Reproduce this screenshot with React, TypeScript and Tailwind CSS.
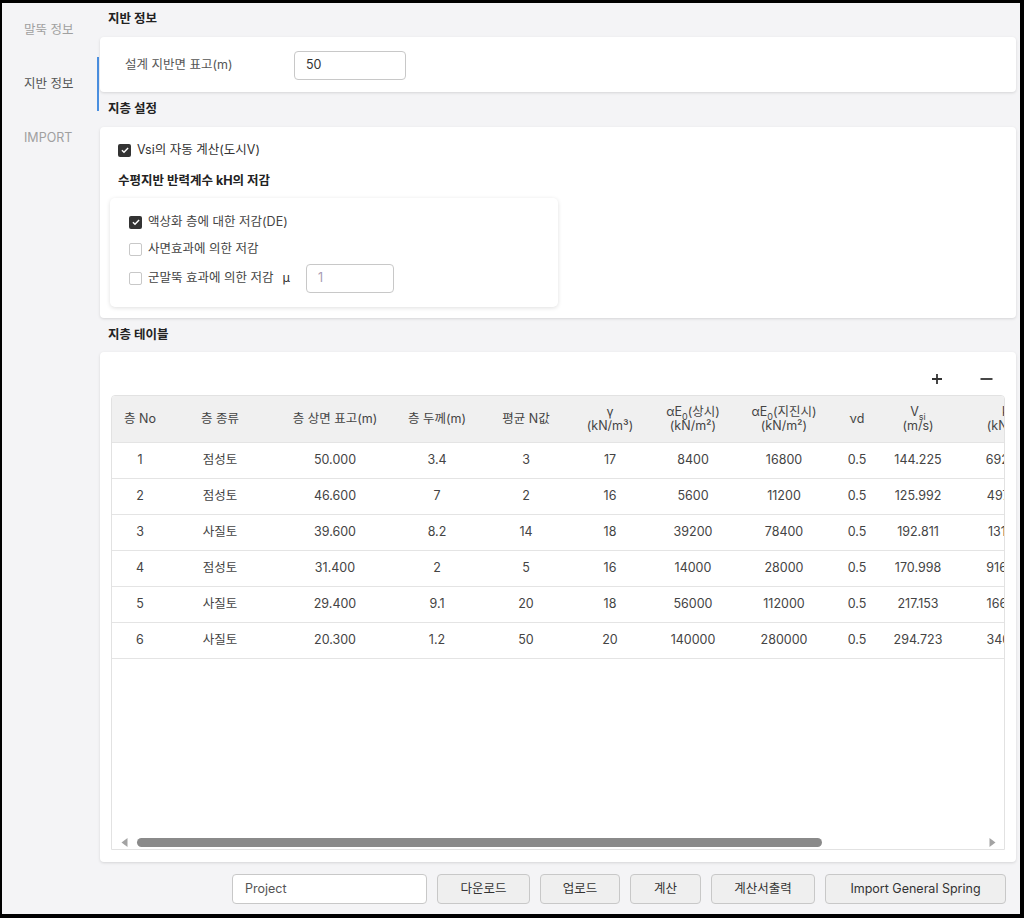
import React from "react";

const cols = [
  "w-[56px]",
  "w-[104px]",
  "w-[126px]",
  "w-[78px]",
  "w-[100px]",
  "w-[68px]",
  "w-[98px]",
  "w-[84px]",
  "w-[62px]",
  "w-[60px]",
  "w-[124px]",
  "w-[110px]",
];

const sub = "text-[9px] leading-[0] align-[-2px]";

const headers: React.ReactNode[] = [
  "층 No",
  "층 종류",
  "층 상면 표고(m)",
  "층 두께(m)",
  "평균 N값",
  <>
    γ<br />
    (kN/m³)
  </>,
  <>
    αE<sub className={sub}>0</sub>(상시)
    <br />
    (kN/m²)
  </>,
  <>
    αE<sub className={sub}>0</sub>(지진시)
    <br />
    (kN/m²)
  </>,
  "νd",
  <>
    V<sub className={sub}>si</sub>
    <br />
    (m/s)
  </>,
  <>
    kH
    <br />
    (kN/m³)
  </>,
  <>
    G<sub className={sub}>0</sub>
    <br />
    (kN/m²)
  </>,
];

const rows = [
  ["1", "점성토", "50.000", "3.4", "3", "17", "8400", "16800", "0.5", "144.225", "69236.7", "36047.2"],
  ["2", "점성토", "46.600", "7", "2", "16", "5600", "11200", "0.5", "125.992", "49712.3", "25891.0"],
  ["3", "사질토", "39.600", "8.2", "14", "18", "39200", "78400", "0.5", "192.811", "13104.7", "68215.4"],
  ["4", "점성토", "31.400", "2", "5", "16", "14000", "28000", "0.5", "170.998", "91644.8", "47689.3"],
  ["5", "사질토", "29.400", "9.1", "20", "18", "56000", "112000", "0.5", "217.153", "16652.3", "86521.7"],
  ["6", "사질토", "20.300", "1.2", "50", "20", "140000", "280000", "0.5", "294.723", "34091.7", "17709.5"],
];

function Check({ checked }: { checked?: boolean }) {
  if (checked) {
    return (
      <span className="w-[13px] h-[13px] shrink-0 rounded-[2px] bg-[#333] flex items-center justify-center">
        <svg width="10" height="10" viewBox="0 0 12 12">
          <path d="M2.3 6.3l2.5 2.5 4.9-5.3" stroke="#fff" strokeWidth="1.7" fill="none" />
        </svg>
      </span>
    );
  }
  return <span className="w-[13px] h-[13px] shrink-0 rounded-[2px] border border-[#c8c8c8] bg-white" />;
}

function Heading({ children, className = "" }: { children: React.ReactNode; className?: string }) {
  return (
    <div className={`h-[20px] flex items-center pl-[8px] text-[12.5px] font-bold text-[#222] ${className}`}>
      {children}
    </div>
  );
}

export default function App() {
  return (
    <div className="w-[1024px] h-[918px] bg-black pt-[3px] pl-[2px] pr-[4px] pb-[4px] font-[Inter,'Noto_Sans_CJK_KR',sans-serif]">
      <div className="h-full flex bg-[#f4f4f6]">
        {/* Sidebar */}
        <div className="w-[97px] shrink-0 flex flex-col text-[12.5px]">
          <div className="h-[54px] flex items-center pl-[22px] text-[#a0a0a0]">말뚝 정보</div>
          <div className="h-[54px] flex items-center pl-[22px] text-[#555] border-r-2 border-[#4a8fe0]">지반 정보</div>
          <div className="h-[54px] flex items-center pl-[22px] text-[#a0a0a0]">IMPORT</div>
        </div>

        {/* Main */}
        <div className="flex-1 flex flex-col pt-[6px] pr-[4px] ml-[1px] text-[12.5px] text-[#333] min-w-0">
          <Heading>지반 정보</Heading>
          <div className="mt-[8px] bg-white rounded-[4px] shadow-[0_1px_3px_rgba(0,0,0,0.13)] pt-[14px] pb-[12px] pl-[25px] flex items-center">
            <div className="w-[169px] text-[#555]">설계 지반면 표고(m)</div>
            <div className="w-[112px] h-[29px] border border-[#c8c8c8] rounded-[4px] pl-[11px] flex items-center text-[#333]">
              50
            </div>
          </div>

          <Heading className="mt-[7px]">지층 설정</Heading>
          <div className="mt-[8px] bg-white rounded-[4px] shadow-[0_1px_3px_rgba(0,0,0,0.13)] pt-[13px] px-[10px] pb-[11px]">
            <div className="h-[20px] pl-[8px] flex items-center gap-[6px]">
              <Check checked />
              <span>Vsi의 자동 계산(도시V)</span>
            </div>
            <div className="mt-[11px] h-[20px] pl-[8px] flex items-center font-bold text-[#222]">
              수평지반 반력계수 kH의 저감
            </div>
            <div className="mt-[7px] w-[448px] bg-white rounded-[5px] shadow-[0_1px_4px_rgba(0,0,0,0.13)] pt-[14px] pb-[14px] pl-[19px] text-[#444]">
              <div className="h-[20px] flex items-center gap-[6px]">
                <Check checked />
                <span>액상화 층에 대한 저감(DE)</span>
              </div>
              <div className="mt-[7px] h-[20px] flex items-center gap-[6px]">
                <Check />
                <span>사면효과에 의한 저감</span>
              </div>
              <div className="mt-[5px] h-[29px] flex items-center gap-[6px]">
                <Check />
                <span>군말뚝 효과에 의한 저감</span>
                <span className="ml-[3px] text-[#333]">μ</span>
                <div className="ml-[10px] w-[88px] h-[29px] border border-[#c8c8c8] rounded-[4px] pl-[11px] flex items-center text-[#a99bb3]">
                  1
                </div>
              </div>
            </div>
          </div>

          <Heading className="mt-[7px]">지층 테이블</Heading>
          <div className="mt-[7px] flex-1 flex flex-col bg-white rounded-[4px] shadow-[0_1px_3px_rgba(0,0,0,0.13)] pt-[18px] px-[11px] pb-[12px] min-h-0">
            <div className="h-[18px] flex justify-end pr-[7px] gap-[25px] text-[#333]">
              <button className="w-[24px] flex items-center justify-center">
                <svg width="12" height="12" viewBox="0 0 12 12">
                  <path d="M6 1v10M1 6h10" stroke="#333" strokeWidth="1.8" />
                </svg>
              </button>
              <button className="w-[24px] flex items-center justify-center">
                <svg width="13" height="12" viewBox="0 0 13 12">
                  <path d="M0.5 6h12" stroke="#333" strokeWidth="1.8" />
                </svg>
              </button>
            </div>

            <div className="mt-[7px] flex-1 flex flex-col border border-[#e2e2e2] rounded-t-[4px] overflow-hidden min-h-0">
              <div className="flex h-[47px] shrink-0 bg-[#f0f0f0] border-b border-[#e4e4e4] text-[#444] leading-[14px]">
                {headers.map((h, i) => (
                  <div key={i} className={`${cols[i]} shrink-0 flex items-center justify-center text-center`}>
                    <div>{h}</div>
                  </div>
                ))}
              </div>
              {rows.map((r, ri) => (
                <div key={ri} className="flex h-[36px] shrink-0 border-b border-[#e4e4e4] text-[#444]">
                  {r.map((c, ci) => (
                    <div key={ci} className={`${cols[ci]} shrink-0 flex items-center justify-center`}>
                      {c}
                    </div>
                  ))}
                </div>
              ))}
              <div className="flex-1" />
              <div className="h-[14px] shrink-0 flex items-center pl-[9px] pr-[8px]">
                <svg width="7" height="9" viewBox="0 0 7 9">
                  <path d="M6.5 0v9L0.5 4.5z" fill="#a3a3a3" />
                </svg>
                <div className="ml-[9px] w-[685px] h-[9px] rounded-full bg-[#8a8a8a]" />
                <div className="flex-1" />
                <svg width="7" height="9" viewBox="0 0 7 9">
                  <path d="M0.5 0v9L6.5 4.5z" fill="#a3a3a3" />
                </svg>
              </div>
            </div>
          </div>

          <div className="mt-[12px] mb-[10px] h-[30px] shrink-0 flex justify-end gap-[10px] pr-[10px] text-[#333]">
            <div className="w-[195px] h-[30px] bg-white border border-[#c8c8c8] rounded-[4px] pl-[12px] flex items-center text-[#555]">
              Project
            </div>
            <button className="w-[93px] h-[30px] bg-[#efefef] border border-[#c8c8c8] rounded-[4px]">다운로드</button>
            <button className="w-[80px] h-[30px] bg-[#efefef] border border-[#c8c8c8] rounded-[4px]">업로드</button>
            <button className="w-[71px] h-[30px] bg-[#efefef] border border-[#c8c8c8] rounded-[4px]">계산</button>
            <button className="w-[104px] h-[30px] bg-[#efefef] border border-[#c8c8c8] rounded-[4px]">계산서출력</button>
            <button className="w-[181px] h-[30px] bg-[#efefef] border border-[#c8c8c8] rounded-[4px]">
              Import General Spring
            </button>
          </div>
        </div>
      </div>
    </div>
  );
}
